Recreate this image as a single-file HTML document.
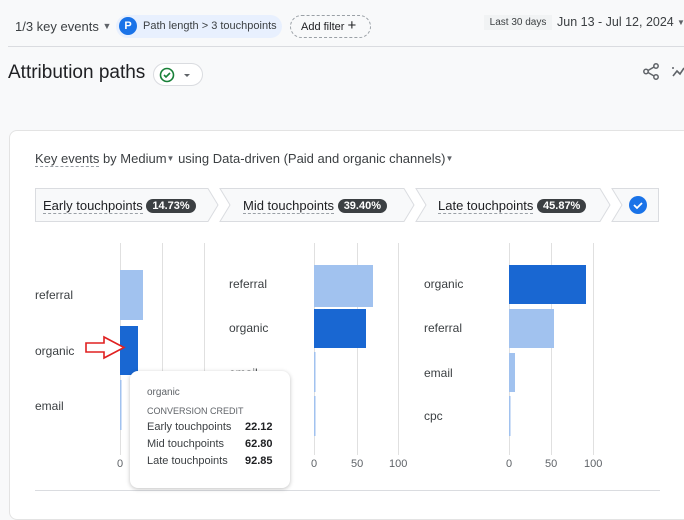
<!DOCTYPE html>
<html><head><meta charset="utf-8"><style>
*{margin:0;padding:0;box-sizing:border-box}
body{width:684px;height:500px;overflow:hidden;background:#f8f9fa;font-family:"Liberation Sans",sans-serif;color:#202124;position:relative}
.a{position:absolute;white-space:nowrap}
.lab{font-size:12px;color:#3c4043}
.ax{font-size:11px;color:#5f6368}
.dash{border-bottom:1px dashed #9aa0a6}
.pill{background:#3c4043;color:#fff;font-size:11px;font-weight:bold;border-radius:8px;padding:1px 6px;position:relative;top:-1px}
</style></head><body>
<div class="a" style="left:15px;top:19px;font-size:13px;color:#3c4043">1/3 key events <span style="font-size:9px;color:#5f6368;position:relative;top:-2px">▼</span></div>
<div class="a" style="left:116px;top:15px;width:166px;height:23px;background:#e8f0fe;border-radius:12px"></div>
<div class="a" style="left:119px;top:17px;width:18px;height:18px;border-radius:50%;background:#1a73e8;color:#fff;font-size:11px;font-weight:bold;text-align:center;line-height:18px">P</div>
<div class="a" style="left:143px;top:20px;font-size:11px;color:#3c4043">Path length &gt; 3 touchpoints</div>
<div class="a" style="left:290px;top:15px;width:81px;height:23px;border:1px dashed #9aa0a6;border-radius:12px;font-size:11px;color:#202124;padding:4px 0 0 10px">Add filter <span style="font-size:15px;line-height:11px">+</span></div>
<div class="a" style="left:484px;top:15px;width:68px;height:15px;background:#f1f3f4;font-size:10px;color:#3c4043;text-align:center;line-height:15px">Last 30 days</div>
<div class="a" style="left:557px;top:15px;font-size:12.5px;color:#3c4043">Jun 13 - Jul 12, 2024</div>
<div class="a" style="left:677px;top:18px;font-size:8px;color:#5f6368">▼</div>
<div class="a" style="left:8px;top:46px;width:676px;height:1px;background:#dadce0"></div>
<div class="a" style="left:8px;top:62px;font-size:19px;color:#202124">Attribution paths</div>
<div class="a" style="left:153px;top:63px;width:50px;height:23px;border:1px solid #dadce0;border-radius:12px;background:#fff"></div>
<svg class="a" style="left:159px;top:66px" width="40" height="18"><circle cx="8" cy="9" r="6.5" fill="none" stroke="#188038" stroke-width="1.6"/><path d="M5 9l2 2 4-4" fill="none" stroke="#188038" stroke-width="1.6"/><path d="M25 8l3 3 3-3z" fill="#5f6368"/></svg>
<svg class="a" style="left:640px;top:62px" width="44" height="20"><circle cx="16" cy="4" r="2.2" fill="none" stroke="#5f6368" stroke-width="1.5"/><circle cx="6" cy="9.5" r="2.2" fill="none" stroke="#5f6368" stroke-width="1.5"/><circle cx="16" cy="15" r="2.2" fill="none" stroke="#5f6368" stroke-width="1.5"/><path d="M8 8.5l6-3.5M8 10.5l6 3.5" stroke="#5f6368" stroke-width="1.5"/><path d="M33 14l4-5 3 3 4-6" fill="none" stroke="#5f6368" stroke-width="1.6"/><circle cx="33" cy="6" r="1" fill="#5f6368"/></svg>
<div class="a" style="left:9px;top:130px;width:690px;height:390px;background:#fff;border:1px solid #e3e3e3;border-radius:8px"></div>
<div class="a" style="left:35px;top:151px;font-size:13px;color:#3c4043"><span class="dash">Key events</span> by Medium<span style="font-size:8px;color:#5f6368;position:relative;top:-2px">▼</span> using Data-driven (Paid and organic channels)<span style="font-size:8px;color:#5f6368;position:relative;top:-2px">▼</span></div>
<svg class="a" style="left:0;top:0" width="684" height="500">
<g fill="#f8f9fa" stroke="#dadce0">
<path d="M35.5 188.5H208L218 205 208 221.5H35.5Z"/>
<path d="M220 188.5H404L414 205 404 221.5H220L230 205Z"/>
<path d="M416 188.5H600L610 205 600 221.5H416L426 205Z"/>
<path d="M612 188.5H658.5V221.5H612L622 205Z"/>
</g>
<circle cx="638" cy="205" r="9" fill="#1a73e8"/><path d="M634 205l3 3 5-5" fill="none" stroke="#fff" stroke-width="1.8"/>
<g stroke="#e0e0e0" stroke-width="1">
<path d="M120.5 243V455M162.5 243V455M204.5 243V455M314.5 243V455M357.5 243V455M398.5 243V455M509.5 243V455M551.5 243V455M593.5 243V455"/>
</g>
<g fill="#a1c2ef"><rect x="120" y="270" width="23" height="50"/><rect x="314" y="265" width="59" height="42"/><rect x="509" y="309" width="45" height="39"/><rect x="509" y="353" width="6" height="39"/><rect x="120" y="380" width="1.5" height="50"/><rect x="314" y="352" width="1.5" height="40"/><rect x="314" y="396" width="1.5" height="40"/><rect x="509" y="396" width="1.5" height="40"/></g>
<g fill="#1967d2"><rect x="120" y="326" width="18" height="49"/><rect x="314" y="309" width="52" height="39"/><rect x="509" y="265" width="77" height="39"/></g>
<path d="M86 343H104V337L124 347.5 104 358V352H86Z" fill="#fff" stroke="#e02020" stroke-width="1.6"/>
<path d="M35 490.5H660" stroke="#dadce0"/>
</svg>
<div class="a" style="left:43px;top:198px;font-size:13px;color:#202124"><span class="dash">Early touchpoints</span> <span class="pill">14.73%</span></div>
<div class="a" style="left:243px;top:198px;font-size:13px;color:#202124"><span class="dash">Mid touchpoints</span> <span class="pill">39.40%</span></div>
<div class="a" style="left:438px;top:198px;font-size:13px;color:#202124"><span class="dash">Late touchpoints</span> <span class="pill">45.87%</span></div>
<div class="a lab" style="left:35px;top:288px">referral</div>
<div class="a lab" style="left:35px;top:344px">organic</div>
<div class="a lab" style="left:35px;top:399px">email</div>
<div class="a lab" style="left:229px;top:277px">referral</div>
<div class="a lab" style="left:229px;top:321px">organic</div>
<div class="a lab" style="left:229px;top:366px">email</div>
<div class="a lab" style="left:424px;top:277px">organic</div>
<div class="a lab" style="left:424px;top:321px">referral</div>
<div class="a lab" style="left:424px;top:366px">email</div>
<div class="a lab" style="left:424px;top:409px">cpc</div>
<div class="a ax" style="left:117px;top:458px">0</div>
<div class="a ax" style="left:311px;top:458px">0</div><div class="a ax" style="left:351px;top:458px">50</div><div class="a ax" style="left:389px;top:458px">100</div>
<div class="a ax" style="left:506px;top:458px">0</div><div class="a ax" style="left:545px;top:458px">50</div><div class="a ax" style="left:584px;top:458px">100</div>
<div class="a" style="left:130px;top:371px;width:160px;height:117px;background:#fff;border-radius:8px;box-shadow:0 1px 4px rgba(0,0,0,.25)"></div>
<div class="a" style="left:147px;top:387px;font-size:10px;color:#5f6368">organic</div>
<div class="a" style="left:147px;top:406px;font-size:9px;color:#5f6368">CONVERSION CREDIT</div>
<div class="a" style="left:147px;top:421px;font-size:11px;color:#3c4043">Early touchpoints</div><div class="a" style="left:245px;top:421px;font-size:11px;font-weight:bold">22.12</div>
<div class="a" style="left:147px;top:438px;font-size:11px;color:#3c4043">Mid touchpoints</div><div class="a" style="left:245px;top:438px;font-size:11px;font-weight:bold">62.80</div>
<div class="a" style="left:147px;top:455px;font-size:11px;color:#3c4043">Late touchpoints</div><div class="a" style="left:245px;top:455px;font-size:11px;font-weight:bold">92.85</div>
</body></html>
